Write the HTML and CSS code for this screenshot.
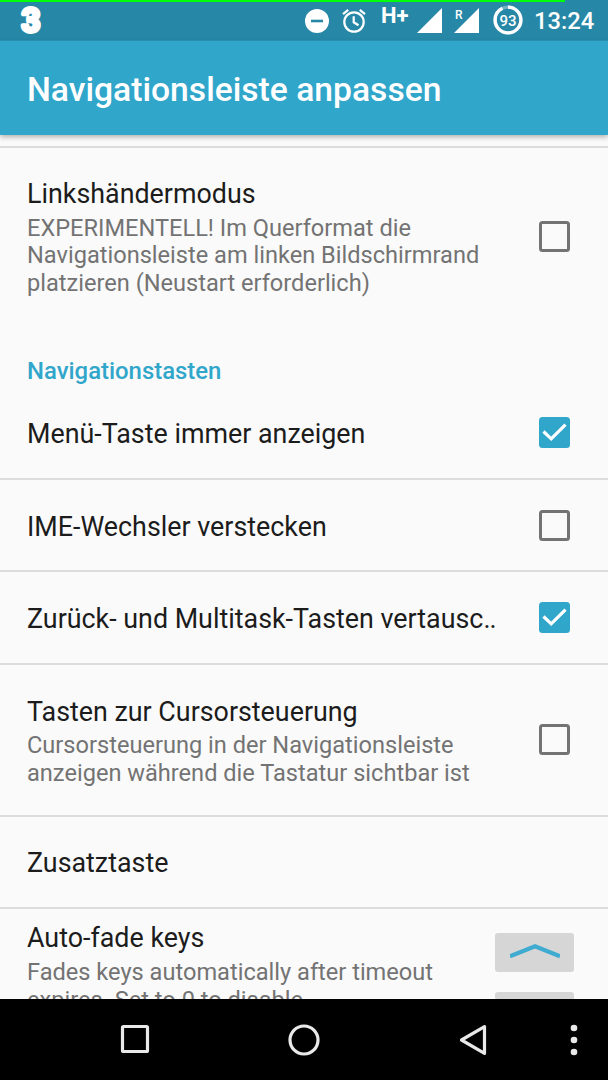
FILE: index.html
```html
<!DOCTYPE html>
<html lang="de">
<head>
<meta charset="utf-8">
<title>Navigationsleiste anpassen</title>
<link rel="stylesheet" href="styles.css">
</head>
<body>
<div class="screen">
  <header class="status">
    <div class="charge"></div>
    <svg class="carrier" width="24" height="30" viewBox="0 0 24 30"><text class="carrier-text" x="12" y="26.500" text-anchor="middle">3</text></svg>
    <svg class="dnd" width="24" height="24" viewBox="0 0 24 24"><circle cx="12" cy="12" r="12" fill="#fff"/><path d="M6 12H18" stroke="#2687a7" stroke-width="2.6"/></svg>
    <svg class="alarm" width="24" height="26" viewBox="0 0 24 26" fill="none" stroke="#fff" stroke-width="2.2"><circle cx="12" cy="14" r="9.7"/><path d="M1 6.2L6.2 1.8M23 6.2L17.800 1.800M11.700 8.200V14.300L16.500 17.200"/></svg>
    <span class="network">H+</span>
    <svg class="signal" width="25" height="25" viewBox="0 0 25 25"><path d="M25 0V25H0Z" fill="#fff"/></svg>
    <div class="roaming">
      <svg width="25" height="25" viewBox="0 0 25 25"><path d="M25 0V25H0Z" fill="#fff"/></svg>
      <span class="roaming-label">R</span>
    </div>
    <div class="battery">
      <svg width="30" height="30" viewBox="0 0 30 30" fill="none" stroke-width="3.400"><circle cx="15" cy="15" r="12.900" stroke="#72b0c5"/><circle cx="15" cy="15" r="12.900" stroke="#fff" pathLength="100" stroke-dasharray="93 7" transform="rotate(-90 15 15)"/></svg>
      <span class="battery-label">93</span>
    </div>
    <span class="clock">13:24</span>
  </header>
  <h1 class="appbar">Navigationsleiste anpassen</h1>
  <main class="list">
    <section class="row row-left">
      <div class="copy"><h2 class="title">Linkshändermodus</h2><p class="summary">EXPERIMENTELL! Im Querformat die<br>Navigationsleiste am linken Bildschirmrand<br>platzieren (Neustart erforderlich)</p></div>
      <span class="box"></span>
    </section>
    <h2 class="category">Navigationstasten</h2>
    <section class="row">
      <h2 class="title single">Menü-Taste immer anzeigen</h2>
      <span class="box checked"><svg width="31" height="31" viewBox="0 0 31 31"><path d="M4.500 14.500L12.200 21.800L26.500 7.600" fill="none" stroke="#fff" stroke-width="3.200"/></svg></span>
    </section>
    <section class="row ruled">
      <h2 class="title single">IME-Wechsler verstecken</h2>
      <span class="box"></span>
    </section>
    <section class="row ruled">
      <h2 class="title single">Zurück- und Multitask-Tasten vertausc<span class="dots">..</span></h2>
      <span class="box checked"><svg width="31" height="31" viewBox="0 0 31 31"><path d="M4.500 14.500L12.200 21.800L26.500 7.600" fill="none" stroke="#fff" stroke-width="3.200"/></svg></span>
    </section>
    <section class="row ruled row-cursor">
      <div class="copy"><h2 class="title">Tasten zur Cursorsteuerung</h2><p class="summary">Cursorsteuerung in der Navigationsleiste<br>anzeigen während die Tastatur sichtbar ist</p></div>
      <span class="box"></span>
    </section>
    <section class="row ruled"><h2 class="title single">Zusatztaste</h2></section>
    <section class="row ruled row-fade">
      <div class="copy"><h2 class="title">Auto-fade keys</h2><p class="summary">Fades keys automatically after timeout<br>expires. Set to 0 to disable</p></div>
      <div class="stepper">
        <span class="step"><svg width="50" height="18" viewBox="0 0 50 18"><path d="M0 13.300L25 3.300L50 13.300" fill="none" stroke="#3fabd0" stroke-width="4.200"/></svg></span>
        <span class="step"></span>
      </div>
    </section>
  </main>
  <nav class="navbar">
    <svg class="recent" width="30" height="30" viewBox="0 0 30 30"><rect x="2.500" y="2.500" width="25" height="25" rx="1" fill="none" stroke="#e9e9e9" stroke-width="3.200"/></svg>
    <svg class="home" width="32" height="32" viewBox="0 0 32 32"><circle cx="16" cy="16" r="14" fill="none" stroke="#e9e9e9" stroke-width="3.200"/></svg>
    <svg class="back" width="28" height="32" viewBox="0 0 28 32"><path d="M25.500 2.600V29.400L2.500 16Z" fill="none" stroke="#e9e9e9" stroke-width="3.200" stroke-linejoin="round"/></svg>
    <svg class="more" width="8" height="32" viewBox="0 0 8 32" fill="#e9e9e9"><circle cx="4" cy="4" r="3.300"/><circle cx="4" cy="16" r="3.300"/><circle cx="4" cy="28" r="3.300"/></svg>
  </nav>
</div>
</body>
</html>
```
FILE: styles.css
```css
* { box-sizing: border-box; }
body { margin: 0; font-family: Roboto, sans-serif; }
h1, h2, p { margin: 0; font-weight: 400; }
svg { display: block; flex: none; }
.screen { width: 608px; height: 1080px; display: flex; flex-direction: column; overflow: hidden; background: #fafafa; }

.status { position: relative; flex: none; height: 41px; display: flex; align-items: flex-start; background: #2687a7; color: #fff; border-bottom: 1px solid #2b96b9; }
.charge { position: absolute; left: 0; top: 0; width: 565px; height: 2px; background: #00ff08; }
.carrier { margin: 5px 262px 0 19px; overflow: visible; }
.carrier-text { font: 700 33px Roboto, sans-serif; fill: #fff; stroke: #fff; stroke-width: 3.800px; stroke-linejoin: round; }
.dnd { margin-top: 9px; }
.alarm { margin: 8px 0 0 13px; }
.network { width: 30px; margin: 4px 0 0 15px; font-size: 22px; line-height: 24px; font-weight: 700; white-space: nowrap; }
.signal { margin: 8px 0 0 6px; }
.roaming { position: relative; margin: 8px 0 0 12px; }
.roaming-label { position: absolute; left: 1px; top: 0; font-size: 12px; line-height: 14px; font-weight: 500; }
.battery { position: relative; margin: 5px 0 0 14px; }
.battery-label { position: absolute; inset: 0; font-size: 15px; line-height: 32px; font-weight: 500; text-align: center; }
.clock { margin: 7px 0 0 11px; font-size: 23.700px; line-height: 28px; font-weight: 500; }

.appbar { position: relative; flex: none; height: 94px; padding: 0 27px; font-size: 33.650px; line-height: 97px; font-weight: 500; color: #fff; background: #31a6cb; box-shadow: 0 2px 5px rgba(0, 0, 0, .3); }
.list { flex: none; height: 864px; padding-top: 10.500px; overflow: hidden; }
.row { height: 92.200px; padding: 0 38.500px 0 27px; display: flex; align-items: center; justify-content: space-between; }
.ruled { border-top: 2px solid #dcdcdc; }
.row-left { height: 179px; border-top: 2px solid #dcdcdc; }
.row-cursor { height: 152px; }
.row-fade { height: 160px; padding-right: 34px; align-items: flex-start; }
.copy { padding-top: 4px; }
.title { font-size: 26.850px; line-height: 32px; color: #1c1c1c; white-space: nowrap; }
.single { padding-top: 3px; }
.dots { letter-spacing: -1px; }
.summary { margin-top: 4.500px; font-size: 23.600px; line-height: 27.700px; color: #737373; white-space: nowrap; }
.category { height: 61.600px; padding: 32px 27px 0; font-size: 23.900px; line-height: 28px; font-weight: 500; color: #31a6cb; }
.box { flex: none; width: 31px; height: 31px; border: 3.500px solid #737373; border-radius: 3.500px; }
.checked { border: 0; background: #31a6cb; }
.row-fade .copy { padding-top: 13.500px; }
.stepper { display: flex; flex-direction: column; gap: 20px; padding-top: 24px; }
.step { width: 79px; height: 39px; display: flex; align-items: center; justify-content: center; border-radius: 3px; background: #d6d6d6; }

.navbar { flex: none; height: 81px; display: flex; align-items: flex-start; padding: 25px 0 0 120px; background: #000; }
.home { margin-left: 138px; }
.back { margin-left: 139px; }
.more { margin-left: 83px; }
```
